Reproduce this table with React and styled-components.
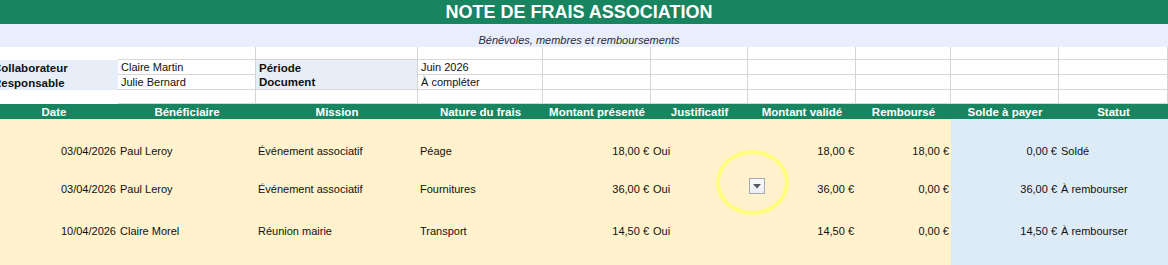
import styled, { createGlobalStyle } from "styled-components";

const GlobalStyle = createGlobalStyle`
  html, body {
    margin: 0;
    padding: 0;
    background: #ffffff;
    overflow: hidden;
  }
  body {
    font-family: "Liberation Sans", Arial, sans-serif;
  }
`;

const COLS = [128, 138, 162, 125, 108, 97, 108, 95, 108, 109];
const GREEN = "#198460";
const GRID = "#d6d6d6";

const Sheet = styled.div`
  display: grid;
  grid-template-columns: ${COLS.map((w) => `${w}px`).join(" ")};
  grid-template-rows: 24px 23px 13px 15px 15px 14px 15px 39px 38px 42px 40px;
  margin-left: -10px;
  width: ${COLS.reduce((a, b) => a + b, 0)}px;
  font-size: 11px;
  color: #111;
`;

const Title = styled.div`
  grid-column: 1 / -1;
  background: ${GREEN};
  color: #fff;
  font-weight: 700;
  font-size: 18px;
  display: flex;
  align-items: center;
  justify-content: center;
  line-height: 20px;
`;

const Subtitle = styled.div`
  grid-column: 1 / -1;
  background: #e8eefb;
  color: #2b2b3a;
  font-style: italic;
  display: flex;
  align-items: flex-end;
  justify-content: center;
  padding-bottom: 0;
  line-height: 13px;
`;

const InfoCell = styled.div`
  box-sizing: border-box;
  background: ${({ $label }) => ($label ? "#e7eef8" : "#fff")};
  border-right: ${({ $first }) => ($first ? "none" : `1px solid ${GRID}`)};
  border-bottom: ${({ $first, $label, $last }) =>
    $first || ($label && !$last) ? "none" : `1px solid ${GRID}`};
  font-weight: ${({ $label }) => ($label ? 700 : 400)};
  font-size: ${({ $label }) => ($label ? "11.5px" : "11px")};
  padding-left: 3px;
  line-height: 14px;
  white-space: nowrap;
  overflow: hidden;
  display: flex;
  align-items: center;
`;

const HeadCell = styled.div`
  background: ${GREEN};
  color: #fff;
  font-weight: 700;
  font-size: 11.5px;
  display: flex;
  align-items: center;
  justify-content: center;
  white-space: nowrap;
  line-height: 14px;
`;

const DataCell = styled.div`
  position: relative;
  background: ${({ $tone }) => ($tone === "blue" ? "#ddebf7" : "#fff2cc")};
  display: flex;
  align-items: flex-end;
  justify-content: ${({ $right }) => ($right ? "flex-end" : "flex-start")};
  padding: 0 ${({ $right }) => ($right ? "2px" : "0")} 0
    ${({ $right }) => ($right ? "0" : "2px")};
  line-height: 13px;
  white-space: nowrap;
`;

const DropButton = styled.div`
  position: absolute;
  left: calc(100% + 1px);
  top: 20px;
  width: 16px;
  height: 16px;
  box-sizing: border-box;
  border: 1px solid #a4a9b6;
  background: linear-gradient(#fbfbfc, #eceef2);
  display: flex;
  align-items: center;
  justify-content: center;
  z-index: 2;
`;

const Highlight = styled.div`
  position: absolute;
  left: 65px;
  top: -8px;
  width: 73px;
  height: 65px;
  box-sizing: border-box;
  border: 4px solid #fffd7e;
  border-radius: 50%;
  pointer-events: none;
  z-index: 1;
`;

const headers = [
  "Date",
  "Bénéficiaire",
  "Mission",
  "Nature du frais",
  "Montant présenté",
  "Justificatif",
  "Montant validé",
  "Remboursé",
  "Solde à payer",
  "Statut",
];

const rows = [
  ["03/04/2026", "Paul Leroy", "Événement associatif", "Péage", "18,00 €", "Oui", "18,00 €", "18,00 €", "0,00 €", "Soldé"],
  ["03/04/2026", "Paul Leroy", "Événement associatif", "Fournitures", "36,00 €", "Oui", "36,00 €", "0,00 €", "36,00 €", "À rembourser"],
  ["10/04/2026", "Claire Morel", "Réunion mairie", "Transport", "14,50 €", "Oui", "14,50 €", "0,00 €", "14,50 €", "À rembourser"],
];

// which columns hold right-aligned values
const rightCols = [0, 4, 6, 7, 8];

const info = [
  ["Collaborateur", "Claire Martin", "Période", "Juin 2026"],
  ["Responsable", "Julie Bernard", "Document", "À compléter"],
];

function BlankInfoRow() {
  return COLS.map((_, i) => <InfoCell key={i} $first={i === 0} />);
}

export default function App() {
  return (
    <>
      <GlobalStyle />
      <Sheet>
        <Title>NOTE DE FRAIS ASSOCIATION</Title>
        <Subtitle>Bénévoles, membres et remboursements</Subtitle>

        <BlankInfoRow />
        {info.map((r, ri) =>
          COLS.map((_, i) => {
            const label = i === 0 || i === 2;
            return (
              <InfoCell
                key={`${ri}-${i}`}
                $first={i === 0}
                $label={label}
                $last={ri === info.length - 1}
              >
                {r[i] || ""}
              </InfoCell>
            );
          })
        )}
        <BlankInfoRow />

        {headers.map((h) => (
          <HeadCell key={h}>{h}</HeadCell>
        ))}

        {rows.map((r, ri) =>
          r.map((v, i) => (
            <DataCell
              key={`${ri}-${i}`}
              $right={rightCols.includes(i)}
              $tone={i >= 8 ? "blue" : "yellow"}
            >
              {v}
              {ri === 1 && i === 5 && (
                <>
                  <Highlight />
                  <DropButton>
                    <svg width="8" height="5" viewBox="0 0 8 5">
                      <path d="M0 0h8L4 4.5z" fill="#555a63" />
                    </svg>
                  </DropButton>
                </>
              )}
            </DataCell>
          ))
        )}
        {COLS.map((_, i) => (
          <DataCell key={`e-${i}`} $tone={i >= 8 ? "blue" : "yellow"} />
        ))}
      </Sheet>
    </>
  );
}
